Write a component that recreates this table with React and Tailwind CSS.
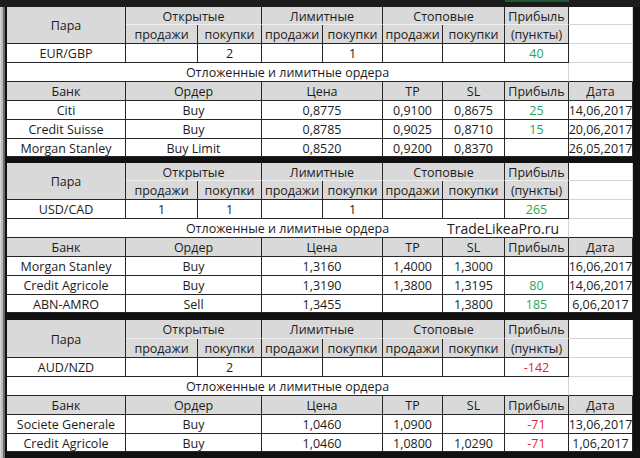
import clsx from "clsx";

const COLS = "grid-cols-[119px_72px_64px_61px_60px_60px_62px_64px_64px]";
const DARK = "border-[#262626]";
const HEAD = "bg-[#d9d9d9]";

function Cell({ children, className }) {
  return (
    <div
      className={clsx(
        "flex items-center justify-center whitespace-nowrap border-r border-b pt-[3px]",
        className
      )}
    >
      {children}
    </div>
  );
}

function Num({ v, tone }) {
  if (!v) return null;
  return <span className={tone === "red" ? "text-[#e3262c]" : "text-[#2aa650]"}>{v}</span>;
}

function Block({ pair, nums, profit, tone, orders, rows, mark }) {
  return (
    <div className={clsx("grid bg-white", COLS, rows)}>
      {/* шапка */}
      <Cell className={clsx("row-span-2", HEAD, DARK)}>Пара</Cell>
      {["Открытые", "Лимитные", "Стоповые"].map((t) => (
        <Cell key={t} className={clsx("col-span-2", HEAD, "border-r-[#262626] border-b-[#efefef]")}>
          {t}
        </Cell>
      ))}
      <Cell className={clsx(HEAD, "border-r-[#262626] border-b-[#efefef]")}>Прибыль</Cell>
      <Cell className="border-[#d4d4d4]" />

      {[0, 1, 2].map((i) => [
        <Cell key={"s" + i} className={clsx(HEAD, DARK)}>продажи</Cell>,
        <Cell key={"b" + i} className={clsx(HEAD, DARK)}>покупки</Cell>,
      ])}
      <Cell className={clsx(HEAD, DARK)}>(пункты)</Cell>
      <Cell className="border-[#d4d4d4]" />

      <Cell className={DARK}>{pair}</Cell>
      {nums.map((n, i) => (
        <Cell key={i} className={DARK}>{n}</Cell>
      ))}
      <Cell className={DARK}>
        <Num v={profit} tone={tone} />
      </Cell>
      <Cell className="border-[#d4d4d4]" />

      {/* отложенные */}
      <Cell className="relative col-span-8 border-r-[#d4d4d4] border-b-[#262626]">
        Отложенные и лимитные ордера
        {mark && (
          <span className="absolute left-[440px] top-[3px] text-[14px]">TradeLikeaPro.ru</span>
        )}
      </Cell>
      <Cell className="border-r-[#d4d4d4] border-b-[#262626]" />

      <Cell className={clsx(HEAD, DARK)}>Банк</Cell>
      <Cell className={clsx("col-span-2", HEAD, DARK)}>Ордер</Cell>
      <Cell className={clsx("col-span-2", HEAD, DARK)}>Цена</Cell>
      <Cell className={clsx(HEAD, DARK)}>TP</Cell>
      <Cell className={clsx(HEAD, DARK)}>SL</Cell>
      <Cell className={clsx(HEAD, DARK)}>Прибыль</Cell>
      <Cell className={clsx(HEAD, DARK)}>Дата</Cell>

      {orders.map((o) => [
        <Cell key={o.bank + "a"} className={DARK}>{o.bank}</Cell>,
        <Cell key={o.bank + "b"} className={clsx("col-span-2", DARK)}>{o.type}</Cell>,
        <Cell key={o.bank + "c"} className={clsx("col-span-2", DARK)}>{o.price}</Cell>,
        <Cell key={o.bank + "d"} className={DARK}>{o.tp}</Cell>,
        <Cell key={o.bank + "e"} className={DARK}>{o.sl}</Cell>,
        <Cell key={o.bank + "f"} className={DARK}>
          <Num v={o.profit} tone={tone} />
        </Cell>,
        <Cell key={o.bank + "g"} className={DARK}>{o.date}</Cell>,
      ])}
    </div>
  );
}

export default function App() {
  return (
    <div
      className="flex h-[458px] w-[640px] flex-col overflow-hidden bg-[#111] text-[12.5px] leading-none text-[#1c1c1c]"
      style={{ fontFamily: '"Open Sans", "Liberation Sans", sans-serif' }}
    >
      <div className="h-[7px] shrink-0 bg-[#1c1c1c]">
        <div className="ml-[505px] h-[2px] w-[64px] bg-[#1d5a34]" />
      </div>
      <div className="flex flex-1">
        <div className="w-[5px] border-l border-l-[#d6d6d6] border-r-2 border-r-[#6b6b6b] bg-[#bcbcbc]" />
        <div className="w-[2px]" />
        <div className="flex w-[626px] flex-col">
          <Block
            pair="EUR/GBP"
            nums={["", "2", "", "1", "", ""]}
            profit="40"
            rows="grid-rows-[18px_19px_19px_19px_19px_19px_19px_18px]"
            orders={[
              { bank: "Citi", type: "Buy", price: "0,8775", tp: "0,9100", sl: "0,8675", profit: "25", date: "14,06,2017" },
              { bank: "Credit Suisse", type: "Buy", price: "0,8785", tp: "0,9025", sl: "0,8710", profit: "15", date: "20,06,2017" },
              { bank: "Morgan Stanley", type: "Buy Limit", price: "0,8520", tp: "0,9200", sl: "0,8370", profit: "", date: "26,05,2017" },
            ]}
          />
          <div className="h-[6px] shrink-0" />
          <Block
            pair="USD/CAD"
            nums={["1", "1", "", "1", "", ""]}
            profit="265"
            mark
            rows="grid-rows-[18px_19px_19px_19px_19px_19px_19px_18px]"
            orders={[
              { bank: "Morgan Stanley", type: "Buy", price: "1,3160", tp: "1,4000", sl: "1,3000", profit: "", date: "16,06,2017" },
              { bank: "Credit Agricole", type: "Buy", price: "1,3190", tp: "1,3800", sl: "1,3195", profit: "80", date: "14,06,2017" },
              { bank: "ABN-AMRO", type: "Sell", price: "1,3455", tp: "", sl: "1,3800", profit: "185", date: "6,06,2017" },
            ]}
          />
          <div className="h-[7px] shrink-0" />
          <Block
            pair="AUD/NZD"
            nums={["", "2", "", "", "", ""]}
            profit="-142"
            tone="red"
            rows="grid-rows-[19px_19px_19px_19px_19px_19px_18px]"
            orders={[
              { bank: "Societe Generale", type: "Buy", price: "1,0460", tp: "1,0900", sl: "", profit: "-71", date: "13,06,2017" },
              { bank: "Credit Agricole", type: "Buy", price: "1,0460", tp: "1,0800", sl: "1,0290", profit: "-71", date: "1,06,2017" },
            ]}
          />
        </div>
        <div className="flex-1" />
      </div>
    </div>
  );
}
